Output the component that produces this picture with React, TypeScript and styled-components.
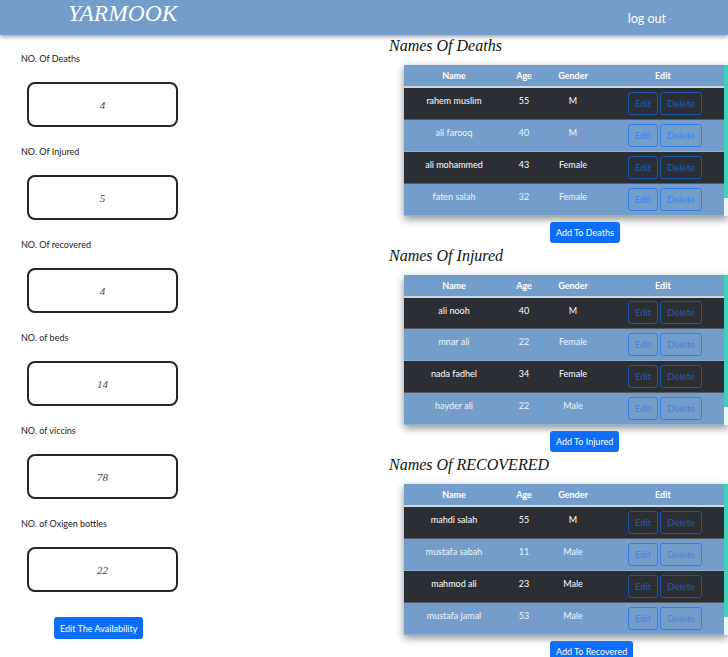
import React from 'react';
import styled, { createGlobalStyle } from 'styled-components';

const GlobalStyle = createGlobalStyle`
  body {
    margin: 0;
    background: #ffffff;
    font-family: Lato, 'Noto Sans', sans-serif;
  }
`;

type Person = { name: string; age: number; gender: string };

const deaths: Person[] = [
  { name: 'rahem muslim', age: 55, gender: 'M' },
  { name: 'ali farooq', age: 40, gender: 'M' },
  { name: 'ali mohammed', age: 43, gender: 'Female' },
  { name: 'faten salah', age: 32, gender: 'Female' },
];

const injured: Person[] = [
  { name: 'ali nooh', age: 40, gender: 'M' },
  { name: 'mnar ali', age: 22, gender: 'Female' },
  { name: 'nada fadhel', age: 34, gender: 'Female' },
  { name: 'hayder ali', age: 22, gender: 'Male' },
];

const recovered: Person[] = [
  { name: 'mahdi salah', age: 55, gender: 'M' },
  { name: 'mustafa sabah', age: 11, gender: 'Male' },
  { name: 'mahmod ali', age: 23, gender: 'Male' },
  { name: 'mustafa jamal', age: 53, gender: 'Male' },
];

const stats = [
  { label: 'NO. Of Deaths', value: '4' },
  { label: 'NO. Of Injured', value: '5' },
  { label: 'NO. Of recovered', value: '4' },
  { label: 'NO. of beds', value: '14' },
  { label: 'NO. of viccins', value: '78' },
  { label: 'NO. of Oxigen bottles', value: '22' },
];

const Header = styled.header`
  height: 35px;
  background: #739dca;
  box-shadow: 0 2px 4px rgba(0, 0, 0, 0.35);
  display: flex;
  align-items: center;
  justify-content: space-between;
  padding: 0 62px 0 68px;
  position: relative;
  z-index: 1;
`;

const Logo = styled.div`
  font-family: 'Liberation Serif', serif;
  font-style: italic;
  font-size: 23.5px;
  color: #ffffff;
  margin-top: -8px;
`;

const LogOut = styled.a`
  font-size: 12.5px;
  color: #ffffff;
  margin-top: 1px;
`;

const Main = styled.main`
  display: grid;
  grid-template-columns: 364px 364px;
`;

const LeftColumn = styled.section`
  display: flex;
  flex-direction: column;
  padding: 17px 0 0 21px;
`;

const StatLabel = styled.div`
  font-size: 9px;
  line-height: 14px;
  color: #222;
`;

const StatBox = styled.div`
  width: 147px;
  height: 41px;
  margin: 16px 0 18px 6px;
  border: 2px solid #1d2a22;
  border-radius: 8px;
  display: flex;
  align-items: center;
  justify-content: center;
  font-family: 'Liberation Serif', serif;
  font-style: italic;
  font-size: 11px;
  color: #444;
`;

const PrimaryButton = styled.button`
  background: #0d6efd;
  color: #ffffff;
  border: none;
  border-radius: 3px;
  font-family: Lato, sans-serif;
  font-size: 9px;
  height: 22px;
  padding: 0 6px;
  cursor: pointer;
`;

const EditAvailability = styled(PrimaryButton)`
  align-self: flex-start;
  margin: 7px 0 0 33px;
`;

const RightColumn = styled.section`
  display: flex;
  flex-direction: column;
  padding: 1px 0 0 25px;
`;

const SectionTitle = styled.h2`
  margin: 0;
  font-family: 'Liberation Serif', serif;
  font-style: italic;
  font-weight: normal;
  font-size: 16px;
  line-height: 20px;
  color: #111;
`;

const TableWrap = styled.div`
  display: flex;
  margin: 9px 0 0 15px;
  box-shadow: 0 3px 8px rgba(0, 0, 0, 0.45);
  width: 324px;
`;

const Table = styled.table`
  width: 320px;
  border-collapse: collapse;
  table-layout: fixed;
  font-size: 9px;
`;

const HeadCell = styled.th<{ w: number }>`
  width: ${(p) => p.w}px;
  height: 21px;
  background: #739dca;
  color: #ffffff;
  font-weight: bold;
  border-bottom: 2px solid #c7d8ec;
  padding: 0;
`;

const Row = styled.tr<{ dark: boolean }>`
  height: 32px;
  background: ${(p) => (p.dark ? '#2b2f33' : '#739dca')};
  color: ${(p) => (p.dark ? '#ffffff' : '#eef3f9')};
  border-bottom: 1px solid ${(p) => (p.dark ? '#555a60' : '#8fb0d6')};
`;

const Cell = styled.td`
  text-align: center;
  vertical-align: top;
  padding: 7px 0 0;
`;

const ActionCell = styled.td`
  text-align: center;
  vertical-align: middle;
  padding: 0 0 0 4px;
  white-space: nowrap;
`;

const OutlineButton = styled.button`
  height: 23px;
  padding: 0 6px;
  margin: 0 1px;
  background: transparent;
  border: 1px solid #0d6efd;
  border-radius: 3px;
  color: #1a78ff;
  opacity: 0.62;
  font-family: Lato, sans-serif;
  font-size: 9.5px;
`;

const ScrollTrack = styled.div`
  width: 4px;
  background: linear-gradient(to bottom, #3fd1bc 0%, #3fd1bc 88%, #e6f7f4 88%, #e6f7f4 100%);
`;

const AddButton = styled(PrimaryButton)`
  align-self: flex-start;
  margin: 6px 0 3px 161px;
  height: 21px;
`;

const cols = [100, 40, 58, 122];

const PeopleTable: React.FC<{ rows: Person[] }> = ({ rows }) => (
  <TableWrap>
    <Table>
      <thead>
        <tr>
          {['Name', 'Age', 'Gender', 'Edit'].map((h, i) => (
            <HeadCell key={h} w={cols[i]}>
              {h}
            </HeadCell>
          ))}
        </tr>
      </thead>
      <tbody>
        {rows.map((r, i) => (
          <Row key={r.name} dark={i % 2 === 0}>
            <Cell>{r.name}</Cell>
            <Cell>{r.age}</Cell>
            <Cell>{r.gender}</Cell>
            <ActionCell>
              <OutlineButton>Edit</OutlineButton>
              <OutlineButton>Delete</OutlineButton>
            </ActionCell>
          </Row>
        ))}
      </tbody>
    </Table>
    <ScrollTrack />
  </TableWrap>
);

const sections = [
  { title: 'Names Of Deaths', rows: deaths, button: 'Add To Deaths' },
  { title: 'Names Of Injured', rows: injured, button: 'Add To Injured' },
  { title: 'Names Of RECOVERED', rows: recovered, button: 'Add To Recovered' },
];

const App: React.FC = () => (
  <>
    <GlobalStyle />
    <Header>
      <Logo>YARMOOK</Logo>
      <LogOut>log out</LogOut>
    </Header>
    <Main>
      <LeftColumn>
        {stats.map((s) => (
          <React.Fragment key={s.label}>
            <StatLabel>{s.label}</StatLabel>
            <StatBox>{s.value}</StatBox>
          </React.Fragment>
        ))}
        <EditAvailability>Edit The Availability</EditAvailability>
      </LeftColumn>
      <RightColumn>
        {sections.map((s) => (
          <React.Fragment key={s.title}>
            <SectionTitle>{s.title}</SectionTitle>
            <PeopleTable rows={s.rows} />
            <AddButton>{s.button}</AddButton>
          </React.Fragment>
        ))}
      </RightColumn>
    </Main>
  </>
);

export default App;
